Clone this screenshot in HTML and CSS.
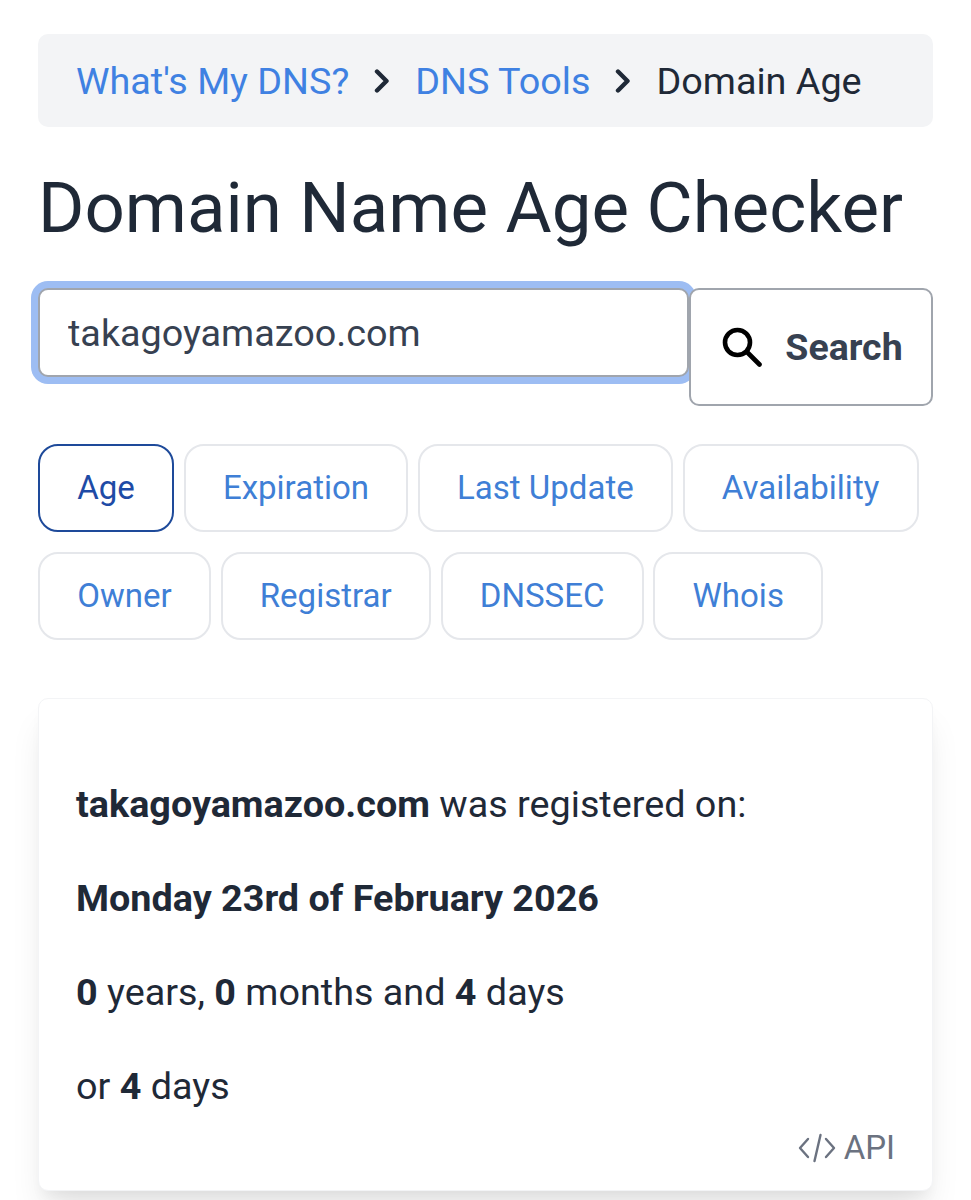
FILE: index.html
```html
<!DOCTYPE html>
<html lang="en">
<head>
<meta charset="utf-8">
<title>Domain Name Age Checker</title>
<link rel="stylesheet" href="styles.css">
</head>
<body>
<main class="page">
  <nav class="crumbs">
    <a class="link" href="#">What's My DNS?</a>
    <svg class="chev" viewBox="0 0 16 24"><path d="M3 2.500l9.500 9.500-9.500 9.500"/></svg>
    <a class="link" href="#">DNS Tools</a>
    <svg class="chev" viewBox="0 0 16 24"><path d="M3 2.500l9.500 9.500-9.500 9.500"/></svg>
    <span>Domain Age</span>
  </nav>
  <h1 class="title">Domain Name Age Checker</h1>
  <form class="search">
    <input class="field" type="text" value="takagoyamazoo.com">
    <button class="btn" type="button">
      <svg class="mag" viewBox="0 0 40 40"><circle cx="15.500" cy="15.500" r="12.500"/><path d="M25 25l12.500 12.500"/></svg>
      <span>Search</span>
    </button>
  </form>
  <div class="tabs">
    <a class="tab active" href="#">Age</a>
    <a class="tab" href="#">Expiration</a>
    <a class="tab" href="#">Last Update</a>
    <a class="tab" href="#">Availability</a>
    <a class="tab" href="#">Owner</a>
    <a class="tab" href="#">Registrar</a>
    <a class="tab" href="#">DNSSEC</a>
    <a class="tab" href="#">Whois</a>
  </div>
  <section class="card">
    <p><b>takagoyamazoo.com</b> was registered on:</p>
    <p><b>Monday 23rd of February 2026</b></p>
    <p><b>0</b> years, <b>0</b> months and <b>4</b> days</p>
    <p>or <b>4</b> days</p>
    <a class="api" href="#">
      <svg class="code" viewBox="0 0 38 30"><path d="M10 6l-8 9 8 9M28 6l8 9-8 9M22.500 2l-6 26"/></svg>
      <span>API</span>
    </a>
  </section>
</main>
</body>
</html>
```
FILE: styles.css
```css
* { box-sizing: border-box; }
html, body { margin: 0; padding: 0; background: #fff; }
body { font-family: Roboto, "Liberation Sans", sans-serif; color: #1f2937; height: 1200px; overflow: hidden; }
.page { padding: 34px 38px 0; }
.crumbs { display: flex; align-items: center; height: 93px; padding: 0 38px; background: #f3f4f6; border-radius: 10px; font-size: 37.76px; }
.link { color: #3f81e2; text-decoration: none; }
.chev { width: 16px; height: 24px; margin: 0 25.500px 0 24.500px; fill: none; stroke: #1f2937; stroke-width: 4.400; stroke-linecap: round; stroke-linejoin: round; }
.title { margin: 38px 0 0; font-size: 70.8px; font-weight: 400; line-height: 86px; }
.search { display: flex; align-items: flex-start; margin-top: 37px; }
.field { flex: 1; min-width: 0; height: 89px; padding: 0 28px; border: 2px solid #a0a5ad; border-radius: 10px; outline: 0; box-shadow: 0 0 0 7px #9dbdf3; font: 37.76px Roboto, sans-serif; color: #374151; background: #fff; }
.btn { position: relative; display: flex; align-items: center; justify-content: center; gap: 23px; width: 244px; height: 117.500px; border: 2px solid #a0a5ad; border-radius: 10px; background: #fff; font: 700 37.500px Roboto, sans-serif; color: #374151; padding: 0 0 0 3px; }
.mag { width: 40px; height: 40px; fill: none; stroke: #000; stroke-width: 4.600; stroke-linecap: round; }
.tabs { display: flex; flex-wrap: wrap; gap: 19.500px 9.500px; margin-top: 38px; }
.tab { display: flex; align-items: center; height: 88.500px; padding: 0 37.250px; border: 2px solid #e5e7eb; border-radius: 20px; font-size: 33.04px; color: #3f7fd6; text-decoration: none; }
.tab.active { color: #1e4ba6; border-color: #1e4a9a; }
.card { position: relative; height: 493px; margin-top: 58px; padding: 83.500px 37px 0; background: #fff; border: 1px solid #f3f4f6; border-radius: 10px; box-shadow: 0 24px 35px -7px rgba(0,0,0,.1), 0 10px 14px -5px rgba(0,0,0,.05); font-size: 37.76px; line-height: 42.3px; color: #1f2937; }
.card p { margin: 0 0 52px; }
.card b { font-weight: 700; }
.api { position: absolute; right: 37px; bottom: 21px; display: flex; align-items: center; gap: 8px; font-size: 33.04px; color: #6b7280; text-decoration: none; }
.code { width: 38px; height: 30px; fill: none; stroke: #6b7280; stroke-width: 2.400; stroke-linecap: round; stroke-linejoin: round; }
```
